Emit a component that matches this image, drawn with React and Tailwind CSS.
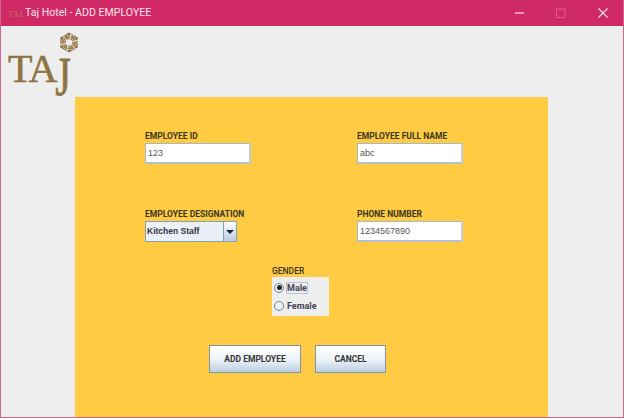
import { useState } from "react";

const labelFont = "font-['Roboto',sans-serif] text-[8.5px] font-bold text-[#3a3524] leading-[11px]";

function Emblem({ className }) {
  const spokes = [0, 60, 120, 180, 240, 300];
  return (
    <svg viewBox="0 0 24 24" className={className}>
      <polygon points="12,1 21.5,6.5 21.5,17.5 12,23 2.5,17.5 2.5,6.5" fill="#8f7443" />
      {spokes.map((deg) => (
        <g key={deg} transform={`rotate(${deg} 12 12)`} fill="none" stroke="#d9cfba" strokeWidth="0.8">
          <path d="M8 4.5 L16 4.5 M9.5 7 L14.5 7" />
          <path d="M4 4 L12 12" stroke="#eeeeee" strokeWidth="0.9" />
        </g>
      ))}
      <circle cx="12" cy="12" r="3.6" fill="#eeeeee" />
    </svg>
  );
}

function Logo({ small }) {
  if (small) {
    return (
      <div className="relative h-[14px] w-[15px]">
        <span className="absolute left-0 top-[3px] font-['Liberation_Serif',serif] text-[9px] leading-[10px] text-[#b8745f]">TAJ</span>
      </div>
    );
  }
  return (
    <div className="relative h-[68px] w-[72px]">
      <Emblem className="absolute left-[57px] top-[5px] h-[23px] w-[22px]" />
      <div className="absolute left-[7px] top-[20px] flex font-['Liberation_Serif',serif] text-[40px] leading-[46px] tracking-[-1px] text-[#8f7443] [-webkit-text-stroke:0.6px_#8f7443]">
        <span>T</span>
        <span className="-ml-[3px]">A</span>
        <span className="-ml-[1px] inline-block origin-top scale-y-[1.36]">J</span>
      </div>
    </div>
  );
}

function TextField({ label, value }) {
  return (
    <div className="flex flex-col">
      <span className={labelFont}>{label}</span>
      <input
        readOnly
        value={value}
        className="mt-[1px] h-[21px] w-[106px] border border-t-[#a9b7c8] border-l-[#a9b7c8] border-r-[2px] border-b-[2px] border-r-[#c3ccd6] border-b-[#b4c0ce] bg-white pl-[2px] font-['Liberation_Sans',sans-serif] text-[9px] text-[#555555] outline-none"
      />
    </div>
  );
}

function Radio({ label, checked, focused, onSelect }) {
  return (
    <button type="button" onClick={onSelect} className="flex items-center gap-[2px]">
      <span className="flex h-[10px] w-[10px] items-center justify-center rounded-full border border-[#6d8299] bg-[#eef3f8]">
        {checked && <span className="h-[5px] w-[5px] rounded-full bg-[#222222]" />}
      </span>
      <span className={`${focused ? "border border-[#b4c4d6]" : "border border-transparent"} font-['Roboto',sans-serif] text-[9px] font-bold leading-[10px] text-[#444455]`}>
        {label}
      </span>
    </button>
  );
}

function ActionButton({ children, width }) {
  return (
    <button
      type="button"
      className={`h-[28px] ${width} border border-[#7f95ab] bg-gradient-to-b from-white via-[#eef3f8] to-[#bcd0e2] font-['Roboto',sans-serif] text-[8.5px] font-bold text-[#333333]`}
    >
      {children}
    </button>
  );
}

export default function App() {
  const [gender, setGender] = useState("Male");

  return (
    <div className="flex h-[418px] w-[624px] flex-col overflow-hidden border-x border-b border-x-[#d0668f] border-b-[#d0668f] bg-[#eeeeee]">
      <header className="-mx-px flex h-[26px] shrink-0 items-center bg-[#cf2a66] pl-[8px] text-white">
        <Logo small />
        <span className="ml-[2px] font-['Roboto',sans-serif] text-[10.6px] text-[#fbe3ec]">Taj Hotel - ADD EMPLOYEE</span>
        <div className="ml-auto flex items-center">
          <svg viewBox="0 0 41 26" className="h-[26px] w-[41px]">
            <path d="M0 13 H9" stroke="#fbdce8" strokeWidth="1.2" />
          </svg>
          <svg viewBox="0 0 42 26" className="h-[26px] w-[42px]">
            <rect x="0.5" y="9" width="8.5" height="8.5" fill="none" stroke="#dd5a8a" />
          </svg>
          <svg viewBox="0 0 26 26" className="h-[26px] w-[26px]">
            <path d="M0.5 8.5 L9.5 17.5 M9.5 8.5 L0.5 17.5" stroke="#fbe3ec" strokeWidth="1.1" />
          </svg>
        </div>
      </header>

      <div className="h-[71px] shrink-0">
        <Logo />
      </div>

      <main className="ml-[74px] flex w-[473px] flex-1 flex-col bg-[#ffcb42] pt-[34px]">
        <div className="grid grid-cols-[212px_106px] gap-y-[45px] pl-[70px]">
          <TextField label="EMPLOYEE ID" value="123" />
          <TextField label="EMPLOYEE FULL NAME" value="abc" />
          <div className="flex flex-col">
            <span className={labelFont}>EMPLOYEE DESIGNATION</span>
            <div className="mt-[1px] flex h-[21px] w-[92px] border border-[#84a0bc] bg-[#eaf0f6]">
              <span className="flex-1 pl-[1px] font-['Liberation_Sans',sans-serif] text-[8.5px] font-bold leading-[19px] text-[#333344]">
                Kitchen Staff
              </span>
              <span className="flex w-[13px] items-center justify-center border-l border-[#84a0bc] bg-gradient-to-b from-white to-[#b9cfe3]">
                <span className="border-x-[4px] border-t-[4px] border-x-transparent border-t-[#222222]" />
              </span>
            </div>
          </div>
          <TextField label="PHONE NUMBER" value="1234567890" />
        </div>

        <div className="ml-[197px] mt-[24px] flex w-[57px] flex-col">
          <span className="font-['Roboto',sans-serif] text-[8.5px] font-medium leading-[11px] text-[#3a3524]">GENDER</span>
          <div className="flex h-[39px] flex-col justify-center gap-[6px] bg-[#eeeeee] pl-[2px]">
            <Radio label="Male" checked={gender === "Male"} focused onSelect={() => setGender("Male")} />
            <Radio label="Female" checked={gender === "Female"} onSelect={() => setGender("Female")} />
          </div>
        </div>

        <div className="ml-[134px] mt-[29px] flex gap-[14px]">
          <ActionButton width="w-[92px]">ADD EMPLOYEE</ActionButton>
          <ActionButton width="w-[71px]">CANCEL</ActionButton>
        </div>
      </main>
    </div>
  );
}
